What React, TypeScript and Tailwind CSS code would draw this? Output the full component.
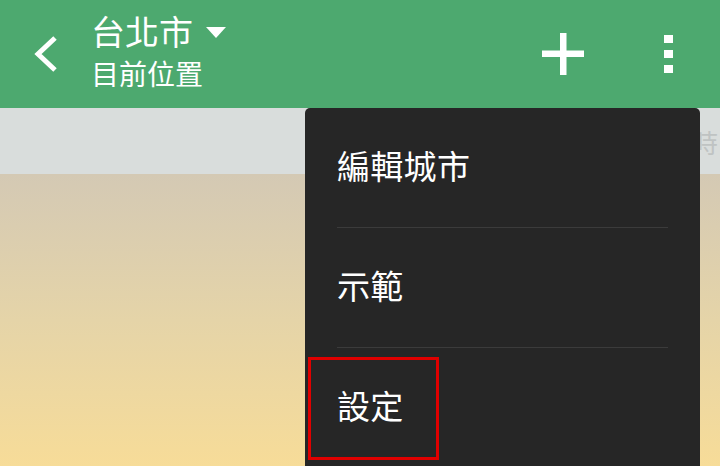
import React from "react";

const font = { fontFamily: '"Noto Sans CJK TC", "Noto Sans", sans-serif' };

export default function App() {
  return (
    <div className="relative w-[720px] h-[466px] overflow-hidden flex flex-col" style={font}>
      {/* App bar */}
      <div className="h-[108px] bg-[#4da96f] flex items-start shrink-0">
        <div className="w-[91px] h-full flex items-center pl-[31px]">
          <svg width="30" height="40" viewBox="0 0 30 40">
            <path d="M24 4 L7 20 L24 36" fill="none" stroke="#ffffff" strokeWidth="5" strokeLinecap="butt" strokeLinejoin="miter" />
          </svg>
        </div>
        <div className="flex flex-col pt-[14px] gap-[11px] text-white">
          <div className="flex items-center">
            <span className="text-[34px] leading-none">台北市</span>
            <svg className="ml-[13px] mt-[2px]" width="20" height="11" viewBox="0 0 20 11">
              <path d="M0 0 L20 0 L10 11 Z" fill="#ffffff" />
            </svg>
          </div>
          <span className="text-[28px] leading-none">目前位置</span>
        </div>
        <div className="flex-1" />
        <div className="h-full flex items-center mr-[80px]">
          <svg width="42" height="42" viewBox="0 0 42 42">
            <rect x="18" y="0" width="6.5" height="42" fill="#ffffff" />
            <rect x="0" y="17.5" width="42" height="6.5" fill="#ffffff" />
          </svg>
        </div>
        <div className="h-full flex items-center mr-[47px]">
          <div className="flex flex-col gap-[6.5px]">
            <div className="w-[9px] h-[8.5px] bg-white" />
            <div className="w-[9px] h-[8.5px] bg-white" />
            <div className="w-[9px] h-[8.5px] bg-white" />
          </div>
        </div>
      </div>

      {/* Gray band */}
      <div className="h-[66px] bg-[#d9dddc] shrink-0 flex justify-end items-start overflow-hidden">
        <span className="text-[26px] leading-none text-[#bfc3c3] mt-[21px] mr-[2px]">時</span>
      </div>

      {/* Gradient background */}
      <div className="flex-1 bg-gradient-to-b from-[#d4c9b4] via-[#e5d4a8] to-[#f7dc98]" />

      {/* Overflow menu */}
      <div className="absolute left-[305px] top-[108px] w-[395px] h-[370px] bg-[#262626] rounded-t-[5px] px-[32px] text-white">
        <div className="h-[119px] flex items-center pb-[4px]">
          <span className="text-[33px] leading-none tracking-[0.3px]">編輯城市</span>
        </div>
        <div className="h-px bg-[#3b3b3b]" />
        <div className="h-[119px] flex items-center pb-[4px]">
          <span className="text-[33px] leading-none tracking-[0.3px]">示範</span>
        </div>
        <div className="h-px bg-[#3b3b3b]" />
        <div className="h-[119px] flex items-center pb-[4px]">
          <span className="text-[33px] leading-none tracking-[0.3px]">設定</span>
        </div>
        <div className="absolute left-[3px] top-[249px] w-[131px] h-[103px] border-[3px] border-[#e00000]" />
      </div>
    </div>
  );
}
